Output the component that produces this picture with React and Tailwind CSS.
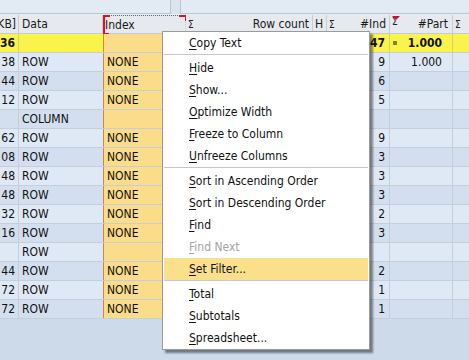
import React from "react";

const FONT = { fontFamily: '"DejaVu Sans Condensed", "Liberation Sans", sans-serif' };

const rows = [
  { c0: "38", data: "ROW", idx: "NONE", ind: "9", part: "1.000" },
  { c0: "44", data: "ROW", idx: "NONE", ind: "6", part: "" },
  { c0: "12", data: "ROW", idx: "NONE", ind: "5", part: "" },
  { c0: "", data: "COLUMN", idx: "", ind: "", part: "" },
  { c0: "62", data: "ROW", idx: "NONE", ind: "9", part: "" },
  { c0: "08", data: "ROW", idx: "NONE", ind: "3", part: "" },
  { c0: "48", data: "ROW", idx: "NONE", ind: "3", part: "" },
  { c0: "48", data: "ROW", idx: "NONE", ind: "3", part: "" },
  { c0: "32", data: "ROW", idx: "NONE", ind: "2", part: "" },
  { c0: "16", data: "ROW", idx: "NONE", ind: "3", part: "" },
  { c0: "", data: "ROW", idx: "", ind: "", part: "" },
  { c0: "44", data: "ROW", idx: "NONE", ind: "2", part: "" },
  { c0: "72", data: "ROW", idx: "NONE", ind: "1", part: "" },
  { c0: "72", data: "ROW", idx: "NONE", ind: "1", part: "" },
];

const menu = [
  { t: "Copy Text" },
  { sep: true },
  { t: "Hide" },
  { t: "Show..." },
  { t: "Optimize Width" },
  { t: "Freeze to Column" },
  { t: "Unfreeze Columns" },
  { sep: true },
  { t: "Sort in Ascending Order" },
  { t: "Sort in Descending Order" },
  { t: "Find" },
  { t: "Find Next", dis: true },
  { t: "Set Filter...", hi: true },
  { sep: true },
  { t: "Total" },
  { t: "Subtotals" },
  { t: "Spreadsheet..." },
];

function Sigma({ red }) {
  return (
    <span className={`relative flex items-center ${red ? "pb-[4px]" : "pt-[1px]"}`}>
      {red && (
        <svg className="absolute left-[0px] top-[1px]" width="8" height="4" viewBox="0 0 8 4">
          <polygon points="0,0 8,0 4,4" fill="#c8102e" />
        </svg>
      )}
      <span className="text-[10px] leading-[10px] text-[#222]">Σ</span>
    </span>
  );
}

export default function App() {
  return (
    <div className="relative w-[469px] h-[360px] overflow-hidden bg-[#cddaea] text-[12px] text-[#111]" style={FONT}>
      {/* top strip */}
      <div className="flex h-[15px] bg-[#d9e4ef] border-b border-[#e6edf4]">
        <div className="w-[171px] h-[14px] bg-[#e2ebf4] border-r border-b border-[#b8c5d3]" />
        <div className="w-[9px]" />
        <div className="flex-1 h-[14px] bg-[#e2ebf4] border-l border-b border-[#b8c5d3]" />
      </div>

      {/* header */}
      <div className="flex h-[19px] bg-[#e6eaef] border-b border-[#c3cbd4] leading-[18px] text-[#1a1a1a]">
        <div className="w-[19px] shrink-0 border-r border-[#c6ccd3] overflow-hidden flex justify-end pr-[2px]">
          <span className="whitespace-nowrap">KB]</span>
        </div>
        <div className="w-[84px] shrink-0 border-r border-[#c6ccd3] pl-[3px]">Data</div>
        <div className="relative w-[83px] shrink-0 border-r border-[#c6ccd3] pl-[2px] border-t border-dotted border-t-[#666]">
          Index
          <span className="absolute left-0 top-[-1px] w-[2px] h-[19px] bg-[#e0102a]" />
          <span className="absolute left-0 top-[-1px] w-[7px] h-[2px] bg-[#e0102a]" />
          <span className="absolute left-0 bottom-[-1px] w-[6px] h-[1px] bg-[#e0102a]" />
          <span className="absolute right-[-1px] top-[-1px] w-[7px] h-[2px] bg-[#e0102a]" />
          <span className="absolute right-[-1px] top-[-1px] w-[1px] h-[6px] bg-[#e0102a]" />
        </div>
        <div className="w-[127px] shrink-0 border-r border-[#c6ccd3] flex justify-between pl-[2px] pr-[3px]">
          <Sigma />
          <span>Row count</span>
        </div>
        <div className="w-[14px] shrink-0 border-r border-[#c6ccd3] pl-[2px]">H</div>
        <div className="w-[63px] shrink-0 border-r border-[#c6ccd3] flex justify-between pl-[2px] pr-[3px]">
          <Sigma />
          <span>#Ind</span>
        </div>
        <div className="w-[63px] shrink-0 border-r border-[#c6ccd3] flex justify-between pl-[2px] pr-[4px]">
          <Sigma red />
          <span>#Part</span>
        </div>
        <div className="flex-1 flex pl-[2px]">
          <Sigma />
        </div>
      </div>

      {/* total row */}
      <div className="flex h-[19px] bg-[#faf34c] border-b border-[#c4cfdb] leading-[18px] font-bold">
        <div className="w-[19px] shrink-0 border-r border-[#d8d070] overflow-hidden flex justify-end pr-[3px]">
          <span className="whitespace-nowrap">36</span>
        </div>
        <div className="w-[84px] shrink-0" />
        <div className="w-[83px] shrink-0 bg-[#fbdc8b] border-l border-[#d4873a]" />
        <div className="w-[127px] shrink-0" />
        <div className="w-[14px] shrink-0" />
        <div className="w-[63px] shrink-0 border-r border-[#d8d070] text-right pr-[4px]">47</div>
        <div className="w-[63px] shrink-0 border-r border-[#d8d070] flex items-center justify-between pl-[3px] pr-[10px]">
          <span className="w-[4px] h-[4px] bg-[#8a8420]" />
          <span>1.000</span>
        </div>
        <div className="flex-1" />
      </div>

      {/* data rows */}
      {rows.map((r, i) => (
        <div
          key={i}
          className={`flex h-[19px] border-b border-[#c4cfdb] leading-[18px] ${i % 2 === 0 ? "bg-[#dfe9f5]" : "bg-[#d3dfee]"}`}
        >
          <div className="w-[19px] shrink-0 border-r border-[#c4cfdb] overflow-hidden flex justify-end pr-[3px]">
            <span className="whitespace-nowrap">{r.c0}</span>
          </div>
          <div className="w-[84px] shrink-0 pl-[3px]">{r.data}</div>
          <div className="w-[83px] shrink-0 bg-[#fbdc8b] border-l border-r border-l-[#d4873a] border-r-[#c4cfdb] pl-[3px]">{r.idx}</div>
          <div className="w-[127px] shrink-0 border-r border-[#c4cfdb]" />
          <div className="w-[14px] shrink-0 border-r border-[#c4cfdb]" />
          <div className="w-[63px] shrink-0 border-r border-[#c4cfdb] text-right pr-[4px]">{r.ind}</div>
          <div className="w-[63px] shrink-0 border-r border-[#c4cfdb] text-right pr-[10px]">{r.part}</div>
          <div className="flex-1" />
        </div>
      ))}

      {/* context menu */}
      <div className="absolute left-[162px] top-[31px] w-[208px] bg-white border border-[#9a9a9a] shadow-[3px_3px_2px_rgba(0,0,0,0.45)]">
        {menu.map((m, i) =>
          m.sep ? (
            <div key={i} className="h-[3px] flex items-start px-[1px]">
              <div className="w-full h-[1px] bg-[#c6c6c6]" />
            </div>
          ) : (
            <div
              key={i}
              className={`h-[22px] leading-[22px] mx-[1px] pl-[25px] whitespace-nowrap ${m.hi ? "bg-[#fcdf8a]" : ""} ${m.dis ? "text-[#a3a3a3]" : "text-[#111]"}`}
            >
              <span className="underline underline-offset-[2px]">{m.t[0]}</span>
              {m.t.slice(1)}
            </div>
          )
        )}
      </div>
    </div>
  );
}
